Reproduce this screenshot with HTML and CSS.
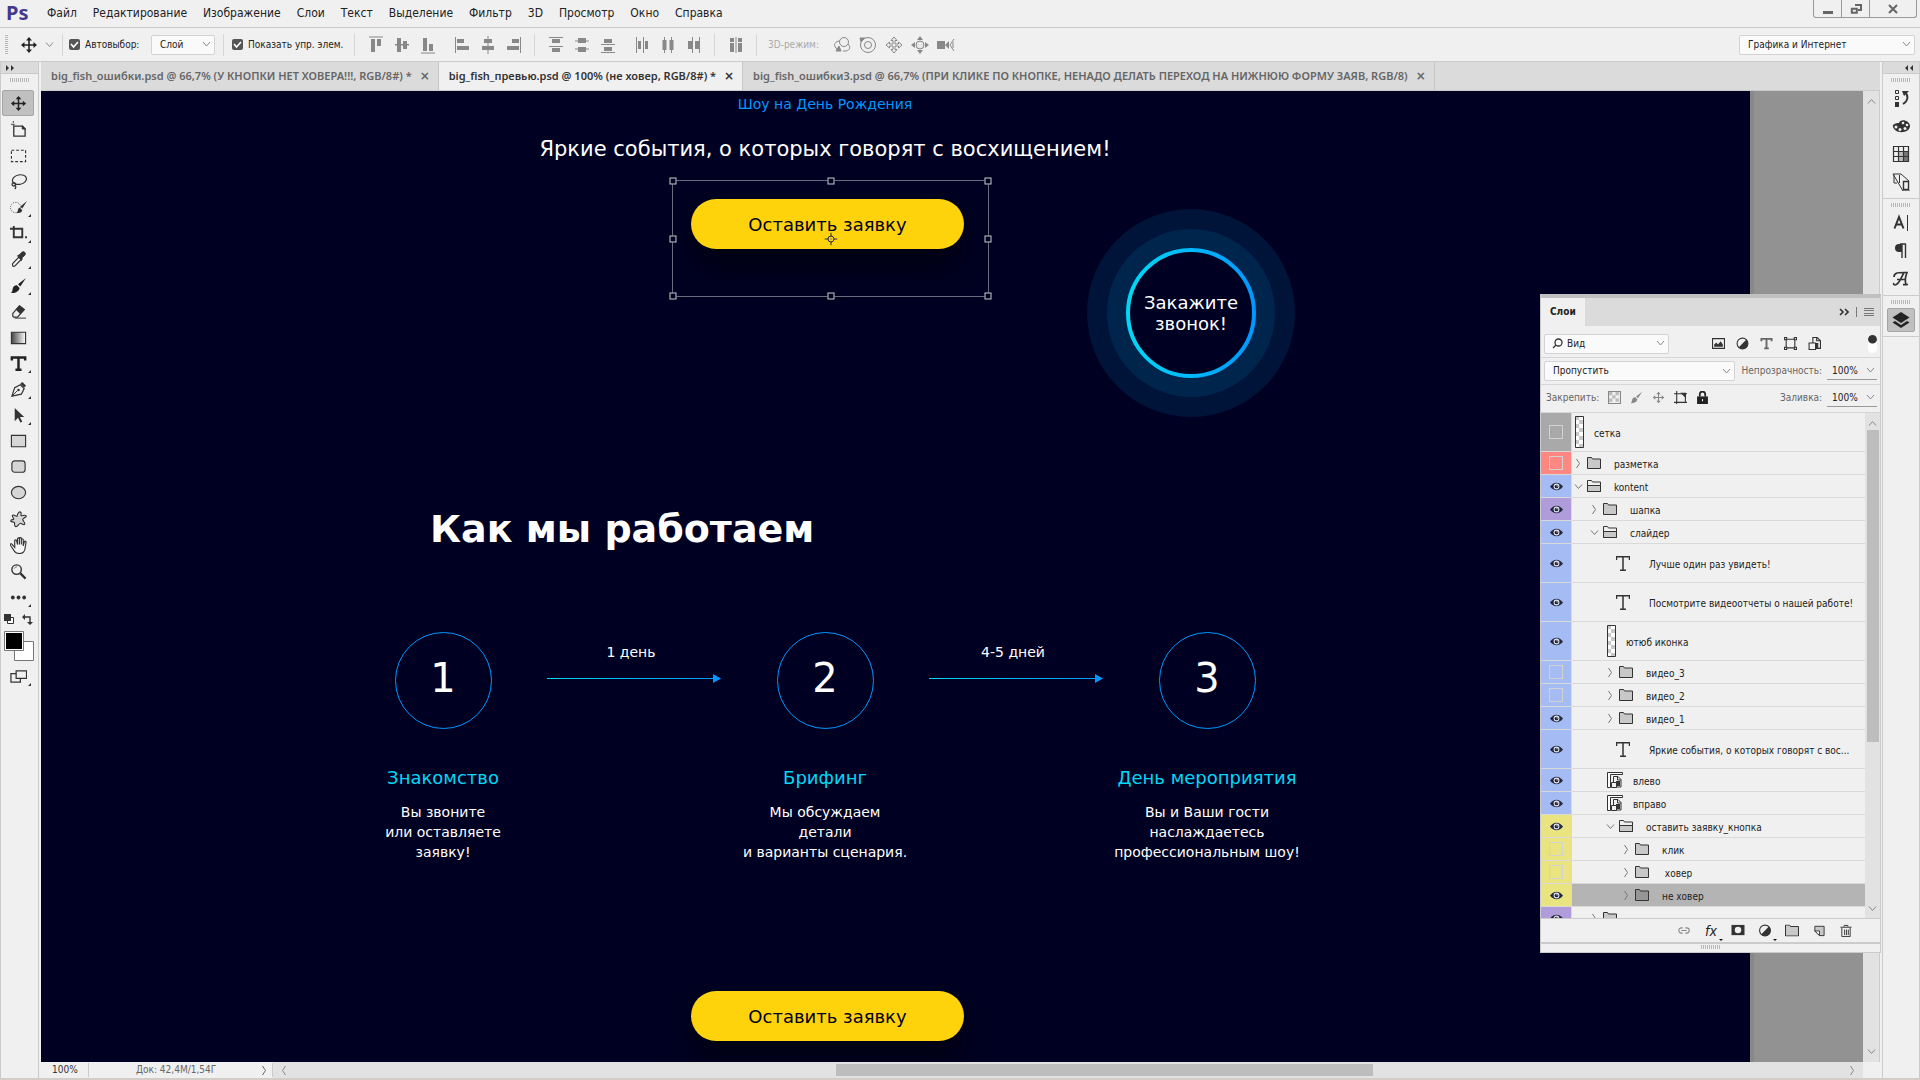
FILE: index.html
```html
<!DOCTYPE html>
<html lang="ru">
<head>
<meta charset="utf-8">
<title>Ps</title>
<link rel="stylesheet" href="styles.css">
</head>
<body>
<svg class="defs" width="0" height="0" aria-hidden="true">
  <defs>
    <linearGradient id="g-ring"><stop offset="0" stop-color="#00d8f5"/><stop offset="1" stop-color="#0098ff"/></linearGradient>
    <linearGradient id="g-tool"><stop offset="0" stop-color="#444"/><stop offset="1" stop-color="#fff"/></linearGradient>
    <pattern id="checks" width="8" height="8" patternUnits="userSpaceOnUse"><path fill="#fff" d="M0 0h8v8H0z"/><path fill="#c8c8c8" d="M0 0h4v4H0zM4 4h4v4H4z"/></pattern>
  </defs>
  <symbol id="move" viewBox="0 0 18 18"><path d="M9 2v14M2 9h14" stroke="currentColor" stroke-width="1.6"/><path fill="currentColor" d="M9 1l3 3.500H6zM9 17l3-3.500H6zM1 9l3.500-3v6zM17 9l-3.500-3v6z"/></symbol>
  <symbol id="chev" viewBox="0 0 9 9"><path d="M1 2.500l3.500 4 3.500-4" fill="none" stroke="currentColor"/></symbol>
  <symbol id="chev-r" viewBox="0 0 9 9"><path d="M2.500 0l3 4.500-3 4.500" fill="none" stroke="currentColor"/></symbol>
  <symbol id="dbl" viewBox="0 0 10 8"><path d="M1 1l3 3-3 3zM6 1l3 3-3 3z" fill="currentColor"/></symbol>
  <symbol id="eye" viewBox="0 0 14 9"><path d="M0 4.500C4-1 10-1 14 4.500 10 10 4 10 0 4.500z" fill="currentColor"/><circle cx="7" cy="4.500" r="3.100" fill="#e6e8f0"/><circle cx="7" cy="4.500" r="2" fill="currentColor"/><circle cx="7.600" cy="3.800" r=".7" fill="#fff"/></symbol>
  <symbol id="folder" viewBox="0 0 14 12"><path d="M.5 11.500V.5h4l1 1.500h8v9.500z" fill="#c8c8c8" stroke="#333"/></symbol>
  <symbol id="folder-dark" viewBox="0 0 14 12"><path d="M.5 11.500V.5h4l1 1.500h8v9.500z" fill="#969696" stroke="#333"/></symbol>
  <symbol id="folder-open" viewBox="0 0 14 12"><path d="M.5 11.500V.5h4l1 1.500h8v9.500z" fill="#f0f0f0" stroke="#333"/><path d="M.5 5.500h13v6H.5z" fill="#c8c8c8" stroke="#333"/></symbol>
  <symbol id="type" viewBox="0 0 14 15"><path d="M.5 4V.8h13V4M7 .8v13.400M4 14.200h6" fill="none" stroke="currentColor" stroke-width="1.500"/></symbol>
  <symbol id="type-b" viewBox="0 0 14 14"><path d="M1.500 4.500V2h11v2.500M7 2v10M4.500 12.200h5" fill="none" stroke="currentColor" stroke-width="2"/></symbol>
  <symbol id="smart" viewBox="0 0 16 16"><path d="M.5 15.500V.5h15v2h-12v13z" fill="#fff" stroke="#333"/><path d="M6.500 10V4.500H11l3 3v7.500H9" fill="#f0f0f0" stroke="#333"/><path d="M10.500 4.500V8H14" fill="none" stroke="#333"/><path d="M9 9h4v5H9z" fill="#333"/><path d="M4.500 10.500h5v5h-5z" fill="#f0f0f0" stroke="#333"/></symbol>
  <symbol id="thumb" viewBox="0 0 9 32"><path d="M.5.5h8v31h-8z" fill="url(#checks)" stroke="#333"/></symbol>
  <symbol id="half" viewBox="0 0 12 12"><circle cx="6" cy="6" r="5" fill="#f0f0f0" stroke="#333"/><path d="M9.600 2.400A5 5 0 0 1 2.400 9.600z" fill="#333"/></symbol>
  <symbol id="brush" viewBox="0 0 16 16"><path d="M15 1L7.500 6.800l2.200 2.200z" fill="currentColor"/><path d="M6.500 7.800L9 10.300C8.500 14 4 15.500 1 15c2-1.500 1-4.500 2.500-6 1-1 2-1.300 3-1.200z" fill="currentColor"/></symbol>
  <symbol id="a-top" viewBox="0 0 16 18"><path d="M1 .5h14v1H1zM3 3h4v13H3zM9 3h4v7H9z" fill="currentColor"/></symbol>
  <symbol id="a-mid" viewBox="0 0 16 18"><path d="M1 8h14v1.500H1zM3 2h4v14H3zM9 5h4v8H9z" fill="currentColor"/></symbol>
  <symbol id="a-bot" viewBox="0 0 16 18"><path d="M1 16.500h14v1H1zM3 2h4v13H3zM9 8h4v7H9z" fill="currentColor"/></symbol>
  <symbol id="a-left" viewBox="0 0 16 18"><path d="M1 1h1v16H1zM3 3h7v4H3zM3 10h12v4H3z" fill="currentColor"/></symbol>
  <symbol id="a-cen" viewBox="0 0 16 18"><path d="M7.500 0h1v18h-1zM4 3h8v4H4zM2 10h12v4H2z" fill="currentColor"/></symbol>
  <symbol id="a-right" viewBox="0 0 16 18"><path d="M14 1h1v16h-1zM6 3h7v4H6zM1 10h12v4H1z" fill="currentColor"/></symbol>
  <symbol id="d-top" viewBox="0 0 16 18"><path d="M1 1h14v1H1zM4 3h8v4H4zM1 10h14v1H1zM4 12h8v4H4z" fill="currentColor"/></symbol>
  <symbol id="d-mid" viewBox="0 0 16 18"><path d="M1 4.500h14v1H1zM4 2h8v5H4zM1 12.500h14v1H1zM4 11h8v5H4z" fill="currentColor"/></symbol>
  <symbol id="d-bot" viewBox="0 0 16 18"><path d="M1 8h14v1H1zM4 3h8v4H4zM1 16h14v1H1zM4 11h8v4H4z" fill="currentColor"/></symbol>
  <symbol id="d-left" viewBox="0 0 16 18"><path d="M2 1h1v16H2zM4 5h3v8H4zM9 1h1v16H9zM11 5h3v8h-3z" fill="currentColor"/></symbol>
  <symbol id="d-cen" viewBox="0 0 16 18"><path d="M4 1h1v16H4zM2.500 4h4v10h-4zM11 1h1v16h-1zM9.500 4h4v10h-4z" fill="currentColor"/></symbol>
  <symbol id="d-right" viewBox="0 0 16 18"><path d="M6 1h1v16H6zM2 5h4v8H2zM13 1h1v16h-1zM9 5h4v8H9z" fill="currentColor"/></symbol>
</svg>

<header class="menubar">
  <span class="logo">Ps</span>
  <nav class="menus">
    <a href="#">Файл</a><a href="#">Редактирование</a><a href="#">Изображение</a><a href="#">Слои</a><a href="#">Текст</a><a href="#">Выделение</a><a href="#">Фильтр</a><a href="#">3D</a><a href="#">Просмотр</a><a href="#">Окно</a><a href="#">Справка</a>
  </nav>
  <div class="winbtns">
    <button aria-label="Свернуть"><svg width="12" height="12"><path d="M1 8h10v3H1z" fill="#666"/></svg></button>
    <button aria-label="Развернуть"><svg width="12" height="12"><path d="M5 2h6v5H8M1.800 5.800h5v4h-5z" fill="none" stroke="#666" stroke-width="2"/></svg></button>
    <button class="wide" aria-label="Закрыть"><svg width="12" height="12"><path d="M2 2l8 8M10 2l-8 8" stroke="#666" stroke-width="2"/></svg></button>
  </div>
</header>

<div class="options">
  <i class="grip-v"></i>
  <div class="group tool"><svg width="18" height="18"><use href="#move"/></svg><svg class="dim" width="9" height="9"><use href="#chev"/></svg></div>
  <div class="group auto"><label><input type="checkbox" checked>Автовыбор:</label><select class="w-layer" aria-label="Автовыбор"><option>Слой</option></select></div>
  <div class="group show"><label><input type="checkbox" checked>Показать упр. элем.</label></div>
  <div class="group icons">
    <svg><use href="#a-top"/></svg><svg><use href="#a-mid"/></svg><svg class="end"><use href="#a-bot"/></svg><svg><use href="#a-left"/></svg><svg><use href="#a-cen"/></svg><svg><use href="#a-right"/></svg>
  </div>
  <div class="group icons">
    <svg><use href="#d-top"/></svg><svg><use href="#d-mid"/></svg><svg class="end"><use href="#d-bot"/></svg><svg><use href="#d-left"/></svg><svg><use href="#d-cen"/></svg><svg><use href="#d-right"/></svg>
  </div>
  <div class="group icons"><svg viewBox="0 0 16 18"><path d="M2 2h4v4H2zM2 7h4v9H2zM7.500 1h1v16h-1zM10 2h4v4h-4zM10 7h4v9h-4z" fill="currentColor"/></svg></div>
  <div class="group mode"><span>3D-режим:</span>
    <svg width="18" height="18" fill="none" stroke="#888"><circle cx="11" cy="6" r="4.500"/><path d="M7 5C2 5 0 9 3 12l4 3M15 8c3 3 2 6-2 7h-3"/><path d="M3 15h5l-2-5z" fill="#888"/></svg>
    <svg width="18" height="18" fill="none" stroke="#888"><circle cx="9" cy="9" r="7.500"/><circle cx="9" cy="9" r="3.500"/><path d="M1 2l5 0-4 4z" fill="#888"/></svg>
    <svg width="18" height="18" fill="none" stroke="#888"><path d="M9 1l3 3.500h-2V8h3.500V6L17 9l-3.500 3v-2H10v3.500h2L9 17l-3-3.500h2V10H4.500v2L1 9l3.500-3v2H8V4.500H6z"/></svg>
    <svg width="18" height="18" fill="#888"><path d="M9 0l3 4H6zM9 18l3-4H6zM0 9l4-3v6zM18 9l-4-3v6z"/><circle cx="9" cy="9" r="4" fill="#e6e6e6" stroke="#888"/></svg>
    <svg width="18" height="18"><path d="M0 5h8v8H0zM8 9l4-4v8z" fill="#888"/><path d="M17 3l-4 6 4 6M16 6v6" fill="none" stroke="#888"/></svg>
  </div>
  <select class="workspace" aria-label="Рабочая среда"><option>Графика и Интернет</option></select>
</div>

<div class="work">
  <aside class="tools">
    <div class="dockhead"><svg width="10" height="8"><use href="#dbl"/></svg></div>
    <i class="grip-h"></i>
    <button class="on" aria-label="Перемещение"><svg viewBox="0 0 18 18"><use href="#move"/></svg></button>
    <button aria-label="Монтажная область"><svg viewBox="0 0 18 18" fill="none" stroke="#333"><path d="M1 3.500h4M3.500 0v5" stroke-dasharray="2 1"/><path d="M4 5.500h9l3 3V16H4z" stroke-width="1.400"/><path d="M13 5l3.500 3.500H13z" fill="#333"/></svg></button>
    <button aria-label="Прямоугольная область"><svg viewBox="0 0 18 18"><path d="M1.500 3.500h15v12h-15z" fill="none" stroke="#333" stroke-width="1.200" stroke-dasharray="3 2"/></svg></button>
    <button aria-label="Лассо"><svg viewBox="0 0 18 18" fill="none" stroke="#333" stroke-width="1.300"><ellipse cx="10" cy="7" rx="7.500" ry="5" transform="rotate(-12 10 7)"/><circle cx="4" cy="12" r="1.800"/><path d="M5 13c2 1 1 3 0 4"/></svg></button>
    <button class="more" aria-label="Быстрое выделение"><svg viewBox="0 0 18 18"><circle cx="6" cy="9" r="5.500" fill="none" stroke="#333" stroke-dasharray="1 1.500"/><path d="M18 2l-7 6 2 2zM10 9l3 3c-1 3-4 3-6 3 2-2 1-5 3-6z" fill="#333"/></svg></button>
    <button class="more" aria-label="Рамка"><svg viewBox="0 0 18 18"><path d="M0 4h13v9M4 1v12h10M16 13h2" fill="none" stroke="#333" stroke-width="2"/></svg></button>
    <button class="more" aria-label="Пипетка"><svg viewBox="0 0 18 18"><path d="M10 6l2.500 2.500-7 7C4 17 1.500 16.500 3 13z" fill="none" stroke="#333" stroke-width="1.300"/><path d="M8 5l2-1 3-3c2-1 4 1 3 3l-3 3-1 3z" fill="#333" stroke="#333"/></svg></button>
    <button class="more" aria-label="Кисть"><svg viewBox="0 0 16 16"><use href="#brush"/></svg></button>
    <button aria-label="Ластик"><svg viewBox="0 0 18 18"><path d="M3 11L10 3l5 4-7 8H4l-1-1z" fill="none" stroke="#333" stroke-width="1.300"/><path d="M10 2.500l6 4.500-5 5-5-5z" fill="#333"/><path d="M5 16h12" stroke="#333"/></svg></button>
    <button aria-label="Градиент"><svg viewBox="0 0 18 18"><path d="M1.500 3.500h15v12h-15z" fill="url(#g-tool)" stroke="#333" stroke-width="1.200"/></svg></button>
    <button class="more" aria-label="Текст"><svg viewBox="0 0 14 14"><use href="#type-b"/></svg></button>
    <button class="more" aria-label="Перо"><svg viewBox="0 0 18 18"><path d="M2 16l3-9 6-3 4 4-3 6z" fill="none" stroke="#333" stroke-width="1.300"/><path d="M11 3l2-2 4 4-2 2z" fill="#333"/><path d="M2 16l6-6" stroke="#333"/><circle cx="9" cy="9.500" r="1.300" fill="#333"/></svg></button>
    <button class="more" aria-label="Выделение контура"><svg viewBox="0 0 18 18"><path d="M5 1v14l3.500-3.500 2.500 5 2-1-2.500-5H15z" fill="#333"/></svg></button>
    <button aria-label="Прямоугольник"><svg viewBox="0 0 18 18"><path d="M1.500 2.500h15v12h-15z" fill="#d6d6d6" stroke="#333" stroke-width="1.200"/></svg></button>
    <button aria-label="Прямоугольник со скругленными углами"><svg viewBox="0 0 18 18"><rect x="2" y="2" width="14" height="12" rx="3" fill="#d6d6d6" stroke="#333" stroke-width="1.200"/></svg></button>
    <button aria-label="Эллипс"><svg viewBox="0 0 18 18"><ellipse cx="9" cy="8" rx="7.500" ry="6.500" fill="#d6d6d6" stroke="#333" stroke-width="1.200"/></svg></button>
    <button aria-label="Произвольная фигура"><svg viewBox="0 0 18 18"><path d="M7.500 5.500C8 2 10 0 11.500 1.500c1 1-.5 3 .5 3.500s4-1.500 5 0-3.500 2.500-3.500 4 3 3.500 2 5-3-1-4.500-1-3 4-5 3.500S5.500 13 4.500 12 .5 12 .8 10.300 4 9.500 4 8.500 1.500 5.500 2.800 4.500s3 1.500 4.700 1z" fill="#d6d6d6" stroke="#333" stroke-width="1.200"/></svg></button>
    <button aria-label="Рука"><svg viewBox="0 0 18 18"><path d="M5 11L2 7.500c-1.500-1-2.500 0-1 2l4 6c1 1.500 3 2 5 2 4 0 6-3 6-6l1-6c0-1.500-2-1.500-2 0l-1 4V3c0-1.500-2-1.500-2 0v5-6.500c0-1.500-2-1.500-2 0V8 2c0-1.500-2-1.500-2 0v6L7 4C6.500 2.500 4.500 3 5 4.500z" fill="#f7f7f7" stroke="#333" stroke-width="1.200"/></svg></button>
    <button aria-label="Масштаб"><svg viewBox="0 0 18 18"><circle cx="7" cy="7" r="5" fill="none" stroke="#333" stroke-width="1.500"/><path d="M4.500 6a3 3 0 0 1 3-2" fill="none" stroke="#777"/><path d="M11 11l5.500 5.500" stroke="#333" stroke-width="2.400"/></svg></button>
    <button class="more" aria-label="Панель инструментов"><svg viewBox="0 0 18 18"><circle cx="3" cy="9" r="2" fill="#333"/><circle cx="9" cy="9" r="2" fill="#333"/><circle cx="15" cy="9" r="2" fill="#333"/></svg></button>
    <div class="swaprow"><svg width="10" height="10"><path d="M3.500 3.500h6v6h-6z" fill="#fff" stroke="#333"/><path d="M0 0h7v7H0z" fill="#333"/></svg><svg width="11" height="11"><path d="M1 3h7v6" fill="none" stroke="#333" stroke-width="1.400"/><path d="M0 3l3-3v6zM8 11L5 8h6z" fill="#333"/></svg></div>
    <svg class="swatch" width="30" height="30"><path d="M10.500 10.500h19v19h-19z" fill="#fff" stroke="#777"/><path d="M.5.5h19v19H.5z" fill="#fff" stroke="#777"/><path d="M2 2h16v16H2z" fill="#000"/></svg>
    <button class="more" aria-label="Режим экрана"><svg viewBox="0 0 18 18"><path d="M1 6h10v9H1z" fill="none" stroke="#333" stroke-width="1.300"/><path d="M6.500 3h11v8h-11z" fill="#f0f0f0" stroke="#333" stroke-width="1.300"/></svg></button>
  </aside>

  <main class="doc">
    <div class="tabs">
      <div class="tab"><span>big_fish_ошибки.psd @ 66,7% (У КНОПКИ НЕТ ХОВЕРА!!!, RGB/8#) *</span><button aria-label="Закрыть вкладку">×</button></div>
      <div class="tab active"><span>big_fish_превью.psd @ 100% (не ховер, RGB/8#) *</span><button aria-label="Закрыть вкладку">×</button></div>
      <div class="tab"><span>big_fish_ошибки3.psd @ 66,7% (ПРИ КЛИКЕ ПО КНОПКЕ, НЕНАДО ДЕЛАТЬ ПЕРЕХОД НА НИЖНЮЮ ФОРМУ ЗАЯВ, RGB/8)</span><button aria-label="Закрыть вкладку">×</button></div>
    </div>
    <div class="view">
      <div class="site">
        <p class="kicker">Шоу на День Рождения</p>
        <p class="lead">Яркие события, о которых говорят с восхищением!</p>
        <div class="picked">
          <button class="cta">Оставить заявку</button>
          <div class="bounds"><i></i><i></i><i></i><i></i><i></i><i></i><i></i><i></i>
            <svg width="13" height="13" fill="none" stroke="#222b55"><circle cx="6.500" cy="6.500" r="3"/><path d="M6.500 0v4M6.500 9v4M0 6.500h4M9 6.500h4M6 6.500h1"/></svg></div>
        </div>
        <button class="call">
          <svg viewBox="0 0 208 208"><circle cx="104" cy="104" r="104" fill="#001338"/><circle cx="104" cy="104" r="84" fill="#00254c"/><circle cx="104" cy="104" r="63" fill="#000022" stroke="url(#g-ring)" stroke-width="4"/></svg>
          <span>Закажите<br>звонок!</span>
        </button>
        <section class="how">
          <h2>Как мы работаем</h2>
          <div class="steps">
            <div class="step"><b>1</b><h3>Знакомство</h3><p>Вы звоните<br>или оставляете<br>заявку!</p></div>
            <div class="hop"><span>1 день</span><svg width="174" height="9"><path d="M0 4h166v1H0z" fill="url(#g-ring)"/><path d="M166 0l8 4.500-8 4.500z" fill="#0098ff"/></svg></div>
            <div class="step"><b>2</b><h3>Брифинг</h3><p>Мы обсуждаем<br>детали<br>и варианты сценария.</p></div>
            <div class="hop"><span>4-5 дней</span><svg width="174" height="9"><path d="M0 4h166v1H0z" fill="url(#g-ring)"/><path d="M166 0l8 4.500-8 4.500z" fill="#0098ff"/></svg></div>
            <div class="step"><b>3</b><h3>День мероприятия</h3><p>Вы и Ваши гости<br>наслаждаетесь<br>профессиональным шоу!</p></div>
          </div>
        </section>
        <button class="cta">Оставить заявку</button>
      </div>
      <div class="paste"></div>
      <div class="vbar"><svg class="flip" width="9" height="9"><use href="#chev"/></svg><svg width="9" height="9"><use href="#chev"/></svg></div>
    </div>
    <footer class="status">
      <span class="zoom">100%</span>
      <span class="size">Док: 42,4M/1,54Г<svg width="9" height="9"><use href="#chev-r"/></svg></span>
      <div class="hbar"><svg class="flip" width="9" height="9"><use href="#chev-r"/></svg><i></i><svg width="9" height="9"><use href="#chev-r"/></svg></div>
    </footer>
  </main>

  <aside class="dock">
    <div class="dockhead"><svg class="flip" width="10" height="8"><use href="#dbl"/></svg></div>
    <div class="dgroup"><i class="grip-h"></i>
      <button aria-label="История"><svg viewBox="0 0 18 18"><path d="M3.500 1.500h3v3h-3zM3.500 7.500h3v3h-3z" fill="none" stroke="#333"/><path d="M3 13h4v5H3zM10 2h7l-5 5z" fill="#333"/><path d="M13 3c4 4 3 9-2 12" fill="none" stroke="#333" stroke-width="1.800"/></svg></button>
      <button aria-label="Цвет"><svg viewBox="0 0 18 18"><path d="M1 10c-1-3 3-4 6-4 1-5 11-3 11 3 0 7-14 9-17 1z" fill="#333"/><g fill="#f0f0f0"><circle cx="4" cy="10" r="1.500"/><circle cx="8" cy="12.500" r="1.500"/><circle cx="13" cy="11.500" r="1.500"/><circle cx="15" cy="8" r="1.300"/><circle cx="11" cy="6" r="1.300"/></g></svg></button>
      <button aria-label="Образцы"><svg viewBox="0 0 18 18"><path d="M1.500 1.500h15v15h-15z" fill="#f0f0f0" stroke="#333"/><path d="M11.500 6.500h5v10h-5z" fill="#777"/><path d="M6.500 6.500h5v10h-5z" fill="#bbb"/><path d="M1.500 1.500h15v15h-15zM6.500 1.500v15M11.500 1.500v15M1.500 6.500h15M1.500 11.500h15" fill="none" stroke="#333" stroke-width="1.200"/></svg></button>
      <button aria-label="Источник клонов"><svg viewBox="0 0 18 18" fill="none" stroke="#333"><path d="M1 1h8l8 7M1 1l10 17h7M2 2v8h3M7.500 2v8"/><path d="M11.500 8.500h5v8h-5z" stroke-width="1.400"/></svg></button>
    </div>
    <div class="dgroup"><i class="grip-h"></i>
      <button aria-label="Символ"><svg viewBox="0 0 18 18"><path d="M2.500 14.500L7 3l4.500 11.500M4 10.500h6" fill="none" stroke="#333" stroke-width="2"/><path d="M15.500 1v16" stroke="#333"/></svg></button>
      <button aria-label="Абзац"><svg viewBox="0 0 18 18"><path d="M10 2v14M13.500 2v14M8 2h6" fill="none" stroke="#333" stroke-width="1.400"/><path d="M10 2H7a4 4 0 0 0 0 8h3z" fill="#333"/></svg></button>
      <button aria-label="Глифы"><svg viewBox="0 0 18 18"><path d="M2 7c0-5 5-4.500 13-4.500-2 5-2 9-1 12h2M12 2.500C9 8 7 15 3 15c-1 0-2-1-1-2M5 9.500h8M11 14.700h4" fill="none" stroke="#333" stroke-width="1.700"/></svg></button>
    </div>
    <div class="dgroup"><i class="grip-h"></i>
      <button class="on" aria-label="Слои"><svg viewBox="0 0 18 18"><path d="M9 1l8.500 5.500L9 12 .5 6.500z" fill="#222"/><path d="M3 10l6 4 6-4 2.500 1.500L9 17 .5 11.500z" fill="#222"/></svg></button>
    </div>
  </aside>

  <section class="panel">
    <div class="phead"><span>Слои</span><svg width="10" height="8" fill="none" stroke="#333" stroke-width="1.600"><path d="M1 1l3 3-3 3M6 1l3 3-3 3"/></svg><i></i><svg width="10" height="8" stroke="#777"><path d="M0 .5h10M0 2.500h10M0 5.500h10M0 7.500h10"/></svg></div>
    <div class="prow filter">
      <div class="find"><svg width="11" height="11" fill="none" stroke="#333" stroke-width="1.300"><circle cx="6.500" cy="4.500" r="3.500"/><path d="M4 7l-3 3"/></svg><select aria-label="Фильтр"><option>Вид</option></select></div>
      <div class="kinds">
        <svg viewBox="0 0 12 12"><path d="M.5 1.500h11v9H.5z" fill="none" stroke="#333"/><path d="M2 9V7l2-2 1.500 2L8 4l2 3v2z" fill="#333"/></svg>
        <svg><use href="#half"/></svg>
        <svg><use href="#type-b"/></svg>
        <svg viewBox="0 0 12 12" fill="#f0f0f0" stroke="#333"><path d="M2 2h8v8H2z"/><path d="M.5.5h2v2h-2zM9.500.5h2v2h-2zM.5 9.500h2v2h-2zM9.500 9.500h2v2h-2z"/></svg>
        <svg viewBox="0 0 12 12" stroke="#333" fill="#f0f0f0"><path d="M4.500 6V.5h4l3 3v7H7M8 .5v3h3"/><path d="M1 5.500h6v6H1z"/><path d="M7 6h2v4H7z" fill="#333"/></svg>
      </div>
      <i class="switch"></i>
    </div>
    <div class="prow blend"><select aria-label="Режим наложения"><option>Пропустить</option></select><label>Непрозрачность: <input value="100%"></label></div>
    <div class="prow lock"><span>Закрепить:</span>
      <svg viewBox="0 0 12 12"><path d="M.5.5h11v11H.5z" fill="none" stroke="#888"/><path d="M1 1h3v3H1zM7 1h3v3H7zM4 4h3v3H4zM1 7h3v3H1zM7 7h3v3H7z" fill="#bbb"/></svg>
      <svg class="faded"><use href="#brush"/></svg><svg class="faded"><use href="#move"/></svg>
      <svg viewBox="0 0 12 12" fill="none" stroke="#333"><path d="M2.500 0v12M0 2.500h12M0 10.500h12M10.500 2v9"/><path d="M7 2l3.500 3.500V2z" fill="#333"/></svg>
      <svg viewBox="0 0 12 12"><path d="M1 5h10v7H1z" fill="#222"/><path d="M3.500 5V3a2.500 2.500 0 0 1 5 0v2" fill="none" stroke="#222" stroke-width="1.600"/><path d="M5.500 7.500h1v2h-1z" fill="#eee"/></svg>
      <label>Заливка: <input value="100%"></label></div>
    <div class="plist">
      <ul>
        <li class="tall grey"><button class="vis off" aria-label="Видимость"></button><svg class="th"><use href="#thumb"/></svg><span>сетка</span></li>
        <li class="red"><button class="vis off" aria-label="Видимость"></button><svg class="ch"><use href="#chev-r"/></svg><svg class="fo"><use href="#folder"/></svg><span>разметка</span></li>
        <li class="blue"><button class="vis" aria-label="Видимость"><svg><use href="#eye"/></svg></button><svg class="ch"><use href="#chev"/></svg><svg class="fo"><use href="#folder-open"/></svg><span>kontent</span></li>
        <li class="violet l1"><button class="vis" aria-label="Видимость"><svg><use href="#eye"/></svg></button><svg class="ch"><use href="#chev-r"/></svg><svg class="fo"><use href="#folder"/></svg><span>шапка</span></li>
        <li class="blue l1"><button class="vis" aria-label="Видимость"><svg><use href="#eye"/></svg></button><svg class="ch"><use href="#chev"/></svg><svg class="fo"><use href="#folder-open"/></svg><span>слайдер</span></li>
        <li class="tall blue l2"><button class="vis" aria-label="Видимость"><svg><use href="#eye"/></svg></button><svg class="ty"><use href="#type"/></svg><span>Лучше один раз увидеть!</span></li>
        <li class="tall blue l2"><button class="vis" aria-label="Видимость"><svg><use href="#eye"/></svg></button><svg class="ty"><use href="#type"/></svg><span>Посмотрите видеоотчеты о нашей работе!</span></li>
        <li class="tall blue l2"><button class="vis" aria-label="Видимость"><svg><use href="#eye"/></svg></button><svg class="th"><use href="#thumb"/></svg><span>ютюб иконка</span></li>
        <li class="blue l2"><button class="vis off" aria-label="Видимость"></button><svg class="ch"><use href="#chev-r"/></svg><svg class="fo"><use href="#folder"/></svg><span>видео_3</span></li>
        <li class="blue l2"><button class="vis off" aria-label="Видимость"></button><svg class="ch"><use href="#chev-r"/></svg><svg class="fo"><use href="#folder"/></svg><span>видео_2</span></li>
        <li class="blue l2"><button class="vis" aria-label="Видимость"><svg><use href="#eye"/></svg></button><svg class="ch"><use href="#chev-r"/></svg><svg class="fo"><use href="#folder"/></svg><span>видео_1</span></li>
        <li class="tall blue l2"><button class="vis" aria-label="Видимость"><svg><use href="#eye"/></svg></button><svg class="ty"><use href="#type"/></svg><span>Яркие события, о которых говорят с вос...</span></li>
        <li class="blue l2"><button class="vis" aria-label="Видимость"><svg><use href="#eye"/></svg></button><svg class="so"><use href="#smart"/></svg><span>влево</span></li>
        <li class="blue l2"><button class="vis" aria-label="Видимость"><svg><use href="#eye"/></svg></button><svg class="so"><use href="#smart"/></svg><span>вправо</span></li>
        <li class="yellow l2"><button class="vis" aria-label="Видимость"><svg><use href="#eye"/></svg></button><svg class="ch"><use href="#chev"/></svg><svg class="fo"><use href="#folder-open"/></svg><span>оставить заявку_кнопка</span></li>
        <li class="yellow l3"><button class="vis off" aria-label="Видимость"></button><svg class="ch"><use href="#chev-r"/></svg><svg class="fo"><use href="#folder"/></svg><span>клик</span></li>
        <li class="yellow l3"><button class="vis off" aria-label="Видимость"></button><svg class="ch"><use href="#chev-r"/></svg><svg class="fo"><use href="#folder"/></svg><span>&nbsp;ховер</span></li>
        <li class="yellow l3 sel"><button class="vis" aria-label="Видимость"><svg><use href="#eye"/></svg></button><svg class="ch"><use href="#chev-r"/></svg><svg class="fo"><use href="#folder-dark"/></svg><span>не ховер</span></li>
        <li class="violet l1"><button class="vis" aria-label="Видимость"><svg><use href="#eye"/></svg></button><svg class="ch"><use href="#chev-r"/></svg><svg class="fo"><use href="#folder"/></svg></li>
      </ul>
      <div class="pbar"><svg class="flip" width="9" height="9"><use href="#chev"/></svg><i></i><svg width="9" height="9"><use href="#chev"/></svg></div>
    </div>
    <div class="pfoot">
      <button aria-label="Связать"><svg viewBox="0 0 16 14" fill="none" stroke="#888" stroke-width="1.200"><path d="M6.500 10H5a3 3 0 0 1 0-6h1.500M9.500 4H11a3 3 0 0 1 0 6H9.500M5 7h6"/></svg></button>
      <button class="fx drop">fx</button>
      <button aria-label="Маска"><svg viewBox="0 0 14 14"><path d="M0 1h14v11H0z" fill="#333"/><circle cx="7" cy="6.500" r="3.500" fill="#f0f0f0"/></svg></button>
      <button class="drop" aria-label="Корректирующий слой"><svg viewBox="0 0 12 12"><use href="#half"/></svg></button>
      <button aria-label="Новая группа"><svg viewBox="0 0 14 12"><use href="#folder"/></svg></button>
      <button aria-label="Новый слой"><svg viewBox="0 0 14 14"><path d="M2.500 2.500h10v10h-5l-5-5z" fill="#c8c8c8" stroke="#333"/><path d="M2.500 7.500h5v5z" fill="#fff" stroke="#333"/></svg></button>
      <button aria-label="Удалить"><svg viewBox="0 0 14 14" fill="none" stroke="#333"><path d="M1 3.500h12M5 3V1.500h4V3M2.500 4v9.500h9V4M5.500 6v6M7.500 6v6M9.500 6v6"/></svg></button>
    </div>
    <div class="pgrip"><i class="grip-h"></i></div>
  </section>
</div>
</body>
</html>
```
FILE: styles.css
```css
* { box-sizing: border-box; margin: 0; padding: 0; }
body {
  display: flex; flex-direction: column; height: 100vh; overflow: hidden;
  background: #f0f0f0; color: #222; border-bottom: 2px solid #d2cdc8;
  font: 10px/14px "DejaVu Sans Condensed", "DejaVu Sans", sans-serif;
}
svg { display: block; flex: none; }
i { display: block; flex: none; }
button, input, select { font: inherit; color: inherit; border: 0; background: none; border-radius: 0; }
.defs { position: absolute; }
.flip { transform: rotate(180deg); }

/* menu bar */
.menubar { display: flex; align-items: center; height: 28px; padding: 0 3px 2px 6px; border-bottom: 1px solid #cbcbcb; }
.logo { width: 41px; font: 700 20px/24px "Noto Sans", sans-serif; color: #43398a; }
.menus { display: flex; gap: 16px; font-size: 12px; }
.menus a { color: #222; text-decoration: none; }
.winbtns { display: flex; align-self: flex-start; height: 18px; margin-left: auto; border: 1px solid #999; border-top: 0; border-radius: 0 0 3px 3px; }
.winbtns button { display: grid; place-items: center; width: 28px; border-right: 1px solid #999; }
.winbtns .wide { width: 46px; border: 0; }

/* tool options */
.options { display: flex; align-items: center; height: 34px; padding: 0 5px; border-bottom: 1px solid #cbcbcb; }
.grip-v { width: 3px; height: 20px; background: repeating-linear-gradient(#b8b8b8 0 1px, transparent 1px 2px); }
.group { display: flex; align-items: center; height: 22px; border-right: 1px solid #d6d6d6; }
.group label { display: flex; align-items: center; gap: 5px; white-space: nowrap; }
.tool { width: 55px; padding-left: 12px; gap: 7px; }
.dim { color: #888; }
.auto { width: 161px; padding: 0 8px 0 6px; justify-content: space-between; }
.show { width: 131px; padding-left: 8px; }
input[type=checkbox] { appearance: none; width: 11px; height: 11px; background: #555 url("data:image/svg+xml,%3Csvg xmlns='http://www.w3.org/2000/svg' width='11' height='11'%3E%3Cpath d='M2 5l2.500 3L9 3' fill='none' stroke='white' stroke-width='1.600'/%3E%3C/svg%3E"); border-radius: 2px; }
select {
  appearance: none; height: 20px; padding: 0 20px 0 8px; background: #fafafa url("data:image/svg+xml,%3Csvg xmlns='http://www.w3.org/2000/svg' width='9' height='9'%3E%3Cpath d='M1 2l3.500 4L8 2' fill='none' stroke='%23888'/%3E%3C/svg%3E") no-repeat right 3px center;
  border: 1px solid #d3d3d3; border-radius: 2px;
}
.w-layer { width: 64px; }
.icons { padding: 0 12px 0 13px; gap: 10px; color: #888; }
.icons svg { width: 16px; height: 18px; }
.icons .end { margin-right: 8px; }
.mode { border: 0; padding-left: 11px; gap: 8px; color: #aaa; }
.mode span { margin-right: 6px; }
.workspace { width: 176px; margin-left: auto; }

/* work area */
.work { position: relative; flex: 1; display: flex; min-height: 0; }
.tools { display: flex; flex-direction: column; width: 39px; border: solid #cbcbcb; border-width: 0 1px; }
.dockhead { display: flex; align-items: center; height: 12px; padding-left: 4px; background: #dbdbdb; border-bottom: 1px solid #cbcbcb; color: #333; }
.grip-h { width: 20px; height: 4px; margin: 4px auto 8px; background: repeating-linear-gradient(90deg, #b8b8b8 0 1px, transparent 1px 2px); }
.tools button { position: relative; display: grid; place-items: center; flex: none; width: 32px; height: 26px; margin-left: 1px; }
.tools button svg { width: 17px; height: 17px; }
.on { background: #c0c0c0; border: 1px solid #a5a5a5; border-radius: 2px; }
.more::after { content: ""; position: absolute; right: 3px; bottom: 3px; border: solid #333; border-width: 0 0 3px 3px; border-left-color: transparent; }
.swaprow { display: flex; gap: 8px; padding: 4px 0 5px 3px; }
.swatch { margin: 1px 0 2px 3px; }

.doc { flex: 1; display: flex; flex-direction: column; min-width: 0; margin-left: 2px; }
.tabs { display: flex; height: 29px; background: #dbdbdb; border-bottom: 1px solid #cbcbcb; font: 600 11px/14px "Noto Sans", sans-serif; color: #666; white-space: nowrap; }
.tab { display: flex; align-items: center; gap: 8px; padding: 0 10px; border-right: 1px solid #c8c8c8; }
.tab button { width: 8px; font: 700 12px/14px "DejaVu Sans", sans-serif; }
.active { background: #f0f0f0; color: #333; }
.view { flex: 1; display: flex; min-height: 0; overflow: hidden; }
.paste { width: 113px; background: #929292; border-left: 4px solid #888; }
.vbar { display: flex; flex-direction: column; align-items: center; justify-content: space-between; width: 17px; padding: 6px 0; background: #e2e2e2; color: #888; border-right: 1px solid #cbcbcb; }
.status { display: flex; align-items: center; height: 16px; color: #333; }
.zoom { width: 48px; padding-left: 11px; border-right: 1px solid #cbcbcb; }
.size { display: flex; align-items: center; justify-content: space-between; width: 184px; padding: 0 3px 0 47px; color: #666; border-right: 1px solid #cbcbcb; }
.hbar { flex: 1; display: flex; align-items: center; height: 16px; margin-right: 17px; padding: 0 6px; background: #e2e2e2; color: #888; }
.hbar i { width: 34%; height: 12px; margin: 0 auto 0 calc(35% - 4px); background: #bdbdbd; }

/* site artboard */
.site { position: relative; flex: 1; display: flex; flex-direction: column; align-items: center; padding: 3px 141px 0 0; background: #000022; color: #fff; font: 14px/20px "DejaVu Sans", sans-serif; text-align: center; }
.kicker { color: #0098ff; }
.lead { margin: 20px 0 35px; font-size: 21px; line-height: 30px; }
.picked { position: relative; }
.cta { width: 273px; height: 50px; flex: none; margin-left: 5px; padding-top: 2px; border-radius: 25px; background: #ffd30c; color: #000022; font-size: 18px; box-shadow: 0 20px 30px rgba(0, 0, 0, .45); }
.bounds { position: absolute; inset: -19px -25px -48px -14px; border: 1px solid #6b6b80; }
.bounds i { position: absolute; width: 7px; height: 7px; border: 1px solid #ccc; background: #000022; transform: translate(-50%, -50%); }
.bounds i:nth-child(1) { left: 0; top: 0; }
.bounds i:nth-child(2) { left: 50%; top: 0; }
.bounds i:nth-child(3) { left: 100%; top: 0; }
.bounds i:nth-child(4) { left: 0; top: 50%; }
.bounds i:nth-child(5) { left: 100%; top: 50%; }
.bounds i:nth-child(6) { left: 0; top: 100%; }
.bounds i:nth-child(7) { left: 50%; top: 100%; }
.bounds i:nth-child(8) { left: 100%; top: 100%; }
.bounds svg { position: absolute; left: 50%; top: 50%; transform: translate(-50%, -50%); }
.call { position: absolute; top: 118px; right: 455px; display: grid; place-items: center; width: 208px; height: 208px; font-size: 18px; line-height: 21px; }
.call > * { grid-area: 1 / 1; }
.how { margin: 256px 0 129px; }
.how h2 { margin: 0 0 79px 82px; font-size: 38px; line-height: 48px; text-align: left; }
.steps { display: grid; grid-template-columns: 190px 192px 190px 192px 190px; }
.step b { display: grid; place-items: center; width: 97px; height: 97px; margin: 0 auto 37px; padding-bottom: 6px; border: 1px solid #0098ff; border-radius: 50%; font-size: 40px; line-height: 48px; font-weight: 400; }
.step h3 { margin-bottom: 12px; font-size: 18px; line-height: 24px; font-weight: 400; color: #00d8f5; white-space: nowrap; }
.step p { white-space: nowrap; }
.hop { display: flex; flex-direction: column; align-items: center; gap: 12px; padding-top: 10px; }
.hop span { margin-right: 6px; }

/* right dock */
.dock { width: 38px; margin-left: 2px; border: solid #cbcbcb; border-width: 0 1px; }
.dock .dockhead { justify-content: flex-end; padding-right: 5px; }
.dgroup { display: flex; flex-direction: column; align-items: center; gap: 4px; padding-bottom: 4px; border-bottom: 1px solid #cbcbcb; }
.dgroup .grip-h { margin: 4px 0 0; }
.dgroup button { display: grid; place-items: center; width: 28px; height: 24px; }
.dgroup button svg { width: 18px; height: 18px; }

/* floating layers panel */
.panel { position: absolute; top: 232px; right: 39px; width: 341px; background: #f0f0f0; border: 1px solid #cbcbcb; border-top: 4px solid #c0c0c0; }
.phead { display: flex; align-items: center; gap: 7px; height: 28px; padding-right: 6px; background: #dbdbdb; }
.phead span { width: 44px; margin-right: auto; padding-left: 9px; background: #f0f0f0; font-weight: 700; line-height: 28px; }
.phead i { width: 1px; height: 10px; background: #777; }
.prow { display: flex; align-items: center; height: 27px; border-bottom: 1px solid #d6d6d6; color: #666; }
.prow svg { width: 13px; height: 13px; }
.prow select { color: #222; }
.filter { height: 32px; padding: 4px 3px 0; }
.find { display: grid; align-items: center; }
.find > * { grid-area: 1 / 1; }
.find svg { z-index: 1; width: 11px; height: 11px; margin-left: 8px; }
.find select { width: 125px; padding-left: 22px; }
.kinds { display: flex; gap: 11px; margin-left: 43px; }
.switch { width: 9px; height: 18px; margin-left: auto; background: radial-gradient(circle at 50% 4px, #333 4px, transparent 5px) #fff; border-radius: 5px; }
.blend { justify-content: space-between; padding: 0 3px; }
.blend select { width: 191px; }
.prow input { width: 50px; height: 18px; margin-left: 2px; padding-left: 5px; border-bottom: 1px solid #999; color: #222; background: url("data:image/svg+xml,%3Csvg xmlns='http://www.w3.org/2000/svg' width='9' height='9'%3E%3Cpath d='M1 2l3.500 4L8 2' fill='none' stroke='%23888'/%3E%3C/svg%3E") no-repeat right 2px center; }
.lock { gap: 9px; height: 28px; padding: 0 3px 2px 5px; }
.lock label { margin-left: auto; }
.faded { color: #888; }
.plist { display: flex; height: 506px; overflow: hidden; border-bottom: 1px solid #cbcbcb; }
.plist ul { flex: 1; list-style: none; overflow: hidden; }
.plist li { display: flex; align-items: center; height: 23px; border-bottom: 1px solid #d9d9d9; white-space: nowrap; }
.plist .tall { height: 39px; }
.vis { display: grid; place-items: center; align-self: stretch; width: 31px; margin-right: 2px; border-right: 1px solid #d9d9d9; color: #222840; }
.vis svg { width: 13px; height: 9px; }
.off::before { content: ""; width: 12px; height: 12px; border: 1px solid #d2d2d2; }
.grey .vis { background: #a9a9a9; }
.red .vis { background: #ff8782; }
.blue .vis { background: #a5bbf3; }
.violet .vis { background: #b19cdb; }
.yellow .vis { background: #e9e380; }
.l1 .vis { margin-right: 18px; }
.l2 .vis { margin-right: 34px; }
.l3 .vis { margin-right: 50px; }
.sel { background: #b4b4b4; }
.plist span { padding-top: 4px; }
.ch { width: 9px; height: 9px; margin-right: 4px; color: #777; }
.fo { width: 14px; height: 12px; margin-right: 13px; }
.th { width: 9px; height: 32px; margin: 0 10px 0 1px; }
.ty { width: 14px; height: 15px; margin: 0 19px 0 10px; color: #333; }
.so { width: 16px; height: 16px; margin: 0 10px 0 1px; }
.pbar { display: flex; flex-direction: column; align-items: center; width: 15px; padding: 6px 0 5px; background: #e2e2e2; color: #888; }
.pbar i { width: 12px; height: 312px; margin: 2px 0 auto; background: #bdbdbd; }
.pfoot { display: flex; justify-content: flex-end; align-items: center; gap: 3px; height: 25px; padding-right: 22px; border-bottom: 2px solid #cbcbcb; }
.pfoot button { position: relative; display: grid; place-items: center; width: 24px; height: 20px; }
.pfoot svg { width: 14px; height: 13px; }
.pfoot .fx { font: italic 14px/16px "DejaVu Sans Condensed", sans-serif; }
.drop::after { content: ""; position: absolute; right: 0; bottom: 0; border: 2px solid transparent; border-top-color: #111; border-bottom: 0; }
.pgrip { height: 7px; }
.pgrip .grip-h { margin: 1px auto 0; }
```
